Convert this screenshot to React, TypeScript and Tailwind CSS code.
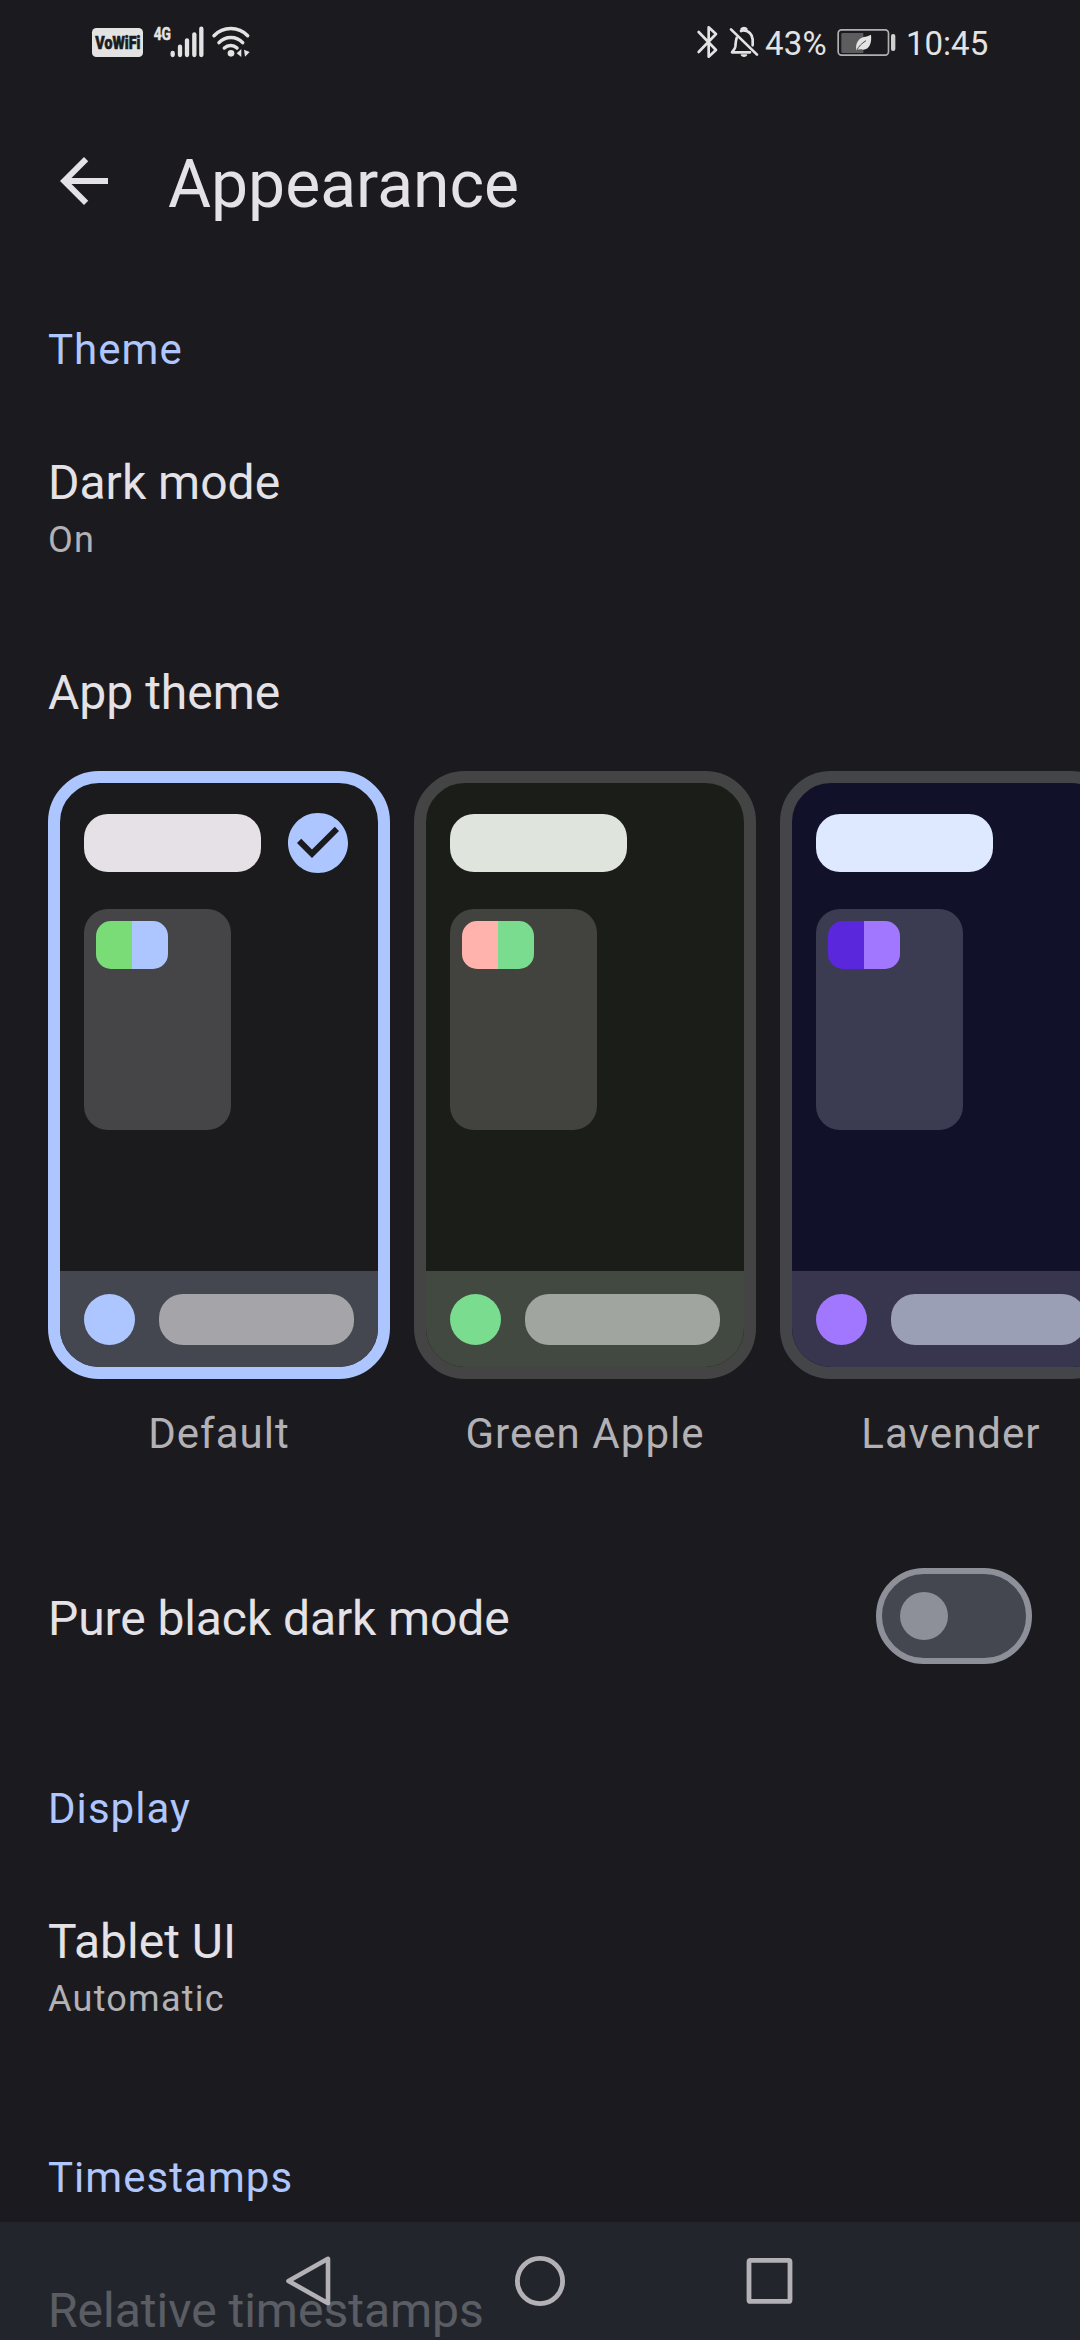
import React from "react";

type Palette = {
  name: string;
  selected?: boolean;
  border: string;
  background: string;
  title: string;
  panel: string;
  tertiary: string;
  primary: string;
  bar: string;
  text: string;
};

const themes: Palette[] = [
  {
    name: "Default",
    selected: true,
    border: "border-[#adc6ff]",
    background: "bg-[#1b1b1e]",
    title: "bg-[#e5e1e6]",
    panel: "bg-[#454447]",
    tertiary: "bg-[#7adc77]",
    primary: "bg-[#adc6ff]",
    bar: "bg-[#44474f]",
    text: "bg-[#a5a4a9]",
  },
  {
    name: "Green Apple",
    border: "border-[#444445]",
    background: "bg-[#1a1d18]",
    title: "bg-[#dfe5dd]",
    panel: "bg-[#42433e]",
    tertiary: "bg-[#ffb3ac]",
    primary: "bg-[#7adc8f]",
    bar: "bg-[#414941]",
    text: "bg-[#a0a59f]",
  },
  {
    name: "Lavender",
    border: "border-[#444548]",
    background: "bg-[#111129]",
    title: "bg-[#dee8ff]",
    panel: "bg-[#3b3c51]",
    tertiary: "bg-[#5b27dd]",
    primary: "bg-[#a177ff]",
    bar: "bg-[#38354e]",
    text: "bg-[#9a9fb5]",
  },
];

function SignalIcons() {
  return (
    <svg className="h-[60px] w-[190px]" viewBox="0 0 570 180" fill="none">
      <rect x="36" y="54" width="153" height="87" rx="13" fill="#e3e3e3" />
      <text x="46" y="117" fontSize="57" fontWeight="900" fill="#1b1b1e" stroke="#1b1b1e" strokeWidth="2" textLength="135" lengthAdjust="spacingAndGlyphs">
        VoWiFi
      </text>
      <text x="221" y="91" fontSize="55" fontWeight="700" fill="#e3e3e3" stroke="#e3e3e3" strokeWidth="1.5" textLength="52" lengthAdjust="spacingAndGlyphs">
        4G
      </text>
      <g stroke="#e3e3e3" strokeWidth="13" strokeLinecap="round">
        <path d="M278 129v6M300 110v25M321 91v44M343 73v62M364 56v79" />
      </g>
      <g stroke="#e3e3e3" strokeWidth="10.5" strokeLinecap="round">
        <path d="M402 77a70 70 0 0 1 101 0" />
        <path d="M417 98a48 48 0 0 1 71 0" />
        <path d="M433 114a28 28 0 0 1 38 0" />
      </g>
      <circle cx="453" cy="130" r="10" fill="#e3e3e3" />
      <path d="M484 117v24l-14-11zM492 119l17 7-14 14z" fill="#e3e3e3" />
    </svg>
  );
}

function BluetoothMutedIcons() {
  return (
    <svg className="h-[60px] w-[84px]" viewBox="0 0 252 180" fill="none" stroke="#e3e3e3" strokeWidth="8" strokeLinecap="round" strokeLinejoin="round">
      <path d="M56 66l52 54-22 20V52l22 20-52 54" />
      <path d="M153 58l78 76" />
      <path d="M170 84c-3 8-3 16-4 26-1 8-7 11-10 17h54" />
      <path d="M183 63c2-1 4-2 6-2 17 0 28 12 29 27v18" />
      <path d="M185 57c3-4 11-4 14 0" />
      <path d="M184 135c3 5 13 5 16 0z" fill="#e3e3e3" strokeWidth="4" />
    </svg>
  );
}

function BatteryIcon() {
  return (
    <svg className="h-[60px] w-[62px]" viewBox="0 0 186 180" fill="none">
      <rect x="12.5" y="59.5" width="151" height="76" rx="10" stroke="#b0b0b1" strokeWidth="5" />
      <path d="M26 69h62v60H26a4 4 0 0 1-4-4V73a4 4 0 0 1 4-4z" fill="#5d5d5f" />
      <rect x="171" y="72" width="13" height="51" rx="6" fill="#cfcfd0" />
      <path d="M111 74c3 24-5 44-23 45-6 0-9-2-12-1l-9 3c-4-22 8-36 22-40 8-2 15-3 22-7z" fill="#e3e3e3" />
      <path d="M69 120c5-11 14-20 27-28" stroke="#4a4a4c" strokeWidth="3" />
    </svg>
  );
}

function StatusBar() {
  return (
    <div className="flex h-[89px] items-start pt-[10px] pl-20">
      <SignalIcons />
      <div className="ml-[410px] flex h-[60px] items-center text-[33px] leading-[60px] text-[#e3e3e3]">
        <BluetoothMutedIcons />
        <span className="ml-[1px] w-[69px] pt-[7px] tracking-[0.2px]">43%</span>
        <BatteryIcon />
        <span className="ml-[10px] pt-[7px]">10:45</span>
      </div>
    </div>
  );
}

function ThemeCard({ theme }: { theme: Palette }) {
  return (
    <div className="w-[342px] shrink-0">
      <div className={`flex h-[608px] flex-col overflow-hidden rounded-[51px] border-[12px] ${theme.border} ${theme.background}`}>
        <div className="mt-[30px] flex h-[60px] items-center justify-between px-6">
          <div className={`h-[58px] w-[177px] rounded-[24px] ${theme.title}`} />
          {theme.selected && (
            <svg className="size-[72px]" viewBox="0 0 24 24" fill="#adc6ff">
              <path d="M12 2C6.48 2 2 6.48 2 12s4.48 10 10 10 10-4.48 10-10S17.52 2 12 2zm-2 15l-5-5 1.41-1.41L10 14.17l7.59-7.59L19 8l-9 9z" />
            </svg>
          )}
        </div>
        <div className={`mt-[36px] ml-6 h-[221px] w-[147px] rounded-[24px] p-3 ${theme.panel}`}>
          <div className="flex h-12 w-[72px] overflow-hidden rounded-[15px]">
            <div className={`w-9 ${theme.tertiary}`} />
            <div className={`w-9 ${theme.primary}`} />
          </div>
        </div>
        <div className={`mt-auto flex h-24 items-center gap-6 px-6 ${theme.bar}`}>
          <div className={`size-[51px] rounded-full ${theme.primary}`} />
          <div className={`h-[51px] w-[195px] rounded-[24px] ${theme.text}`} />
        </div>
      </div>
      <p className="mt-[25px] text-center text-[42px] leading-[60px] tracking-[1.05px] text-[#b3b1b5]">{theme.name}</p>
    </div>
  );
}

function SectionTitle({ children }: { children: React.ReactNode }) {
  return <h2 className="px-12 text-[42px] leading-[60px] tracking-[1.05px] text-[#b0c6ff]">{children}</h2>;
}

function Preference({ title, subtitle }: { title: string; subtitle?: string }) {
  return (
    <div className="mt-[70px] px-12">
      <p className="text-[48px] leading-[66px] text-[#e4e2e6]">{title}</p>
      {subtitle && <p className="text-[36px] leading-[48px] tracking-[1.25px] text-[#b3b1b5]">{subtitle}</p>}
    </div>
  );
}

export default function App() {
  return (
    <div className="relative h-[2340px] w-[1080px] overflow-hidden bg-[#1b1b1f] font-['Roboto',sans-serif]">
      <StatusBar />
      <header className="flex h-48 items-center gap-12 px-12">
        <svg className="mb-[8px] size-[72px]" viewBox="0 0 24 24" fill="#e4e2e6">
          <path d="M20 11H7.83l5.59-5.59L12 4l-8 8 8 8 1.41-1.41L7.83 13H20v-2z" />
        </svg>
        <h1 className="text-[66px] leading-[84px] text-[#e4e2e6]">Appearance</h1>
      </header>

      <main>
        <div className="pt-[39px]">
          <SectionTitle>Theme</SectionTitle>
        </div>
        <Preference title="Dark mode" subtitle="On" />

        <p className="mt-[96px] px-12 text-[48px] leading-[66px] text-[#e4e2e6]">App theme</p>
        <div className="mt-[45px] flex gap-6 overflow-hidden pl-12">
          {themes.map((theme) => (
            <ThemeCard key={theme.name} theme={theme} />
          ))}
        </div>

        <div className="mt-[104px] flex h-24 items-center justify-between px-12">
          <p className="pt-[5px] text-[48px] leading-[66px] tracking-[-0.1px] text-[#e4e2e6]">Pure black dark mode</p>
          <button className="flex h-24 w-[156px] items-center rounded-full border-[6px] border-[#8e9099] bg-[#44474f] pl-[18px]">
            <span className="size-12 rounded-full bg-[#8e9099]" />
          </button>
        </div>

        <div className="pt-[115px]">
          <SectionTitle>Display</SectionTitle>
        </div>
        <Preference title="Tablet UI" subtitle="Automatic" />

        <div className="pt-[125px]">
          <SectionTitle>Timestamps</SectionTitle>
        </div>
        <Preference title="Relative timestamps" />
      </main>

      <nav className="absolute inset-x-0 bottom-0 flex h-[118px] items-center justify-center gap-[176px] bg-[rgba(38,41,50,0.72)]">
        <svg className="size-[54px]" viewBox="0 0 54 54" fill="none" stroke="#b3b1b5" strokeWidth="4.6" strokeLinejoin="round">
          <path d="M45 4.8v44.4L5.5 27z" />
        </svg>
        <svg className="size-[54px]" viewBox="0 0 54 54" fill="none" stroke="#b3b1b5" strokeWidth="4.8">
          <circle cx="27" cy="27" r="22.6" />
        </svg>
        <svg className="size-[54px]" viewBox="0 0 54 54" fill="none" stroke="#b3b1b5" strokeWidth="4.8" strokeLinejoin="round">
          <rect x="6" y="6.4" width="41" height="41" rx="1.5" />
        </svg>
      </nav>
    </div>
  );
}
